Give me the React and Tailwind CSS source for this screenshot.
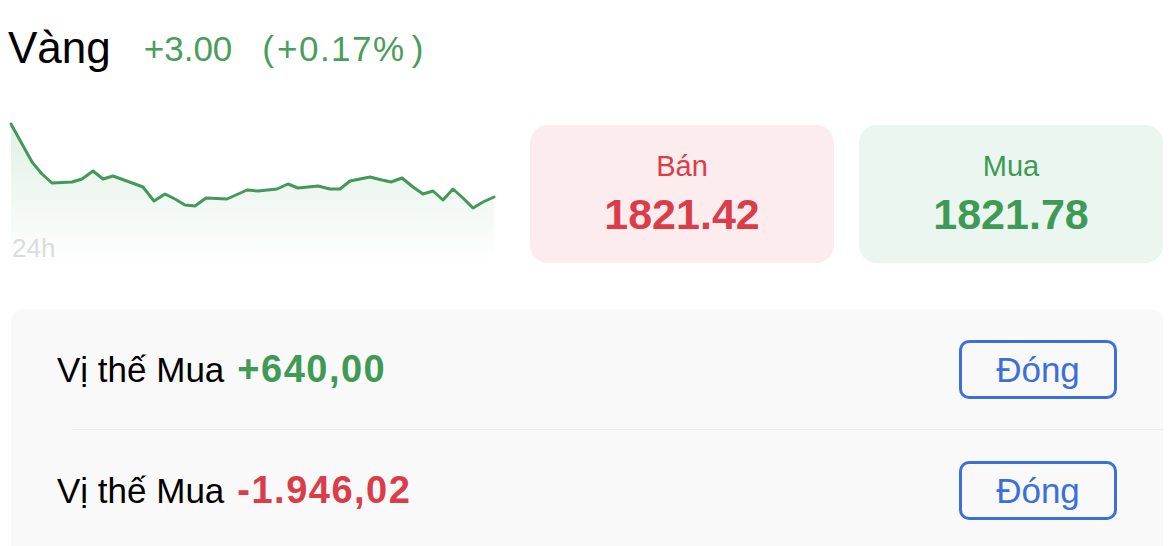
import React from "react";

const pts = [
  [11, 124], [32, 162], [42, 174], [52, 183], [72, 182], [82, 179], [93, 171], [103, 179],
  [113, 176], [135, 184], [143, 187], [154, 201], [165, 194], [175, 199], [185, 205], [195, 206],
  [206, 198], [227, 199], [247, 190], [258, 191], [277, 189], [288, 184], [298, 188], [308, 187],
  [318, 186], [330, 189], [340, 189], [350, 181], [370, 177], [382, 180], [391, 182], [402, 178],
  [413, 187], [423, 194], [433, 191], [443, 200], [453, 189], [463, 198], [473, 208], [483, 202],
  [494, 197],
];

function Chart() {
  const line = pts.map(([x, y], i) => `${i ? "L" : "M"}${x} ${y - 110}`).join(" ");
  const area = `${line} L494 155 L11 155 Z`;
  return (
    <div className="relative w-[520px] h-[160px] shrink-0">
      <svg width="520" height="160" viewBox="0 0 520 160" className="block">
        <defs>
          <linearGradient id="g" x1="0" y1="0" x2="0" y2="1">
            <stop offset="0" stopColor="#43a05a" stopOpacity="0.16" />
            <stop offset="1" stopColor="#43a05a" stopOpacity="0" />
          </linearGradient>
        </defs>
        <path d={area} fill="url(#g)" />
        <path d={line} fill="none" stroke="#43985a" strokeWidth="3" strokeLinejoin="round" strokeLinecap="round" />
      </svg>
      <div className="absolute left-[12px] top-[125px] text-[26px] leading-none text-[#dcdcdc]">24h</div>
    </div>
  );
}

function PriceCard({ label, value, bg, color }) {
  return (
    <div className={`w-[304px] h-[138px] rounded-[18px] flex flex-col items-center pt-[27px] ${bg}`}>
      <div className={`text-[29px] leading-none ${color}`}>{label}</div>
      <div className={`mt-[12px] text-[43px] leading-none font-bold ${color}`}>{value}</div>
    </div>
  );
}

function Row({ value, valueColor }) {
  return (
    <div className="h-[120px] flex items-center justify-between pl-[46px] pr-[46px]">
      <div className="flex items-center">
        <span className="text-[35px] leading-none text-black">Vị thế Mua</span>
        <span className={`ml-[13px] text-[38px] leading-none font-bold tracking-[1.5px] ${valueColor}`}>{value}</span>
      </div>
      <button className="w-[158px] h-[59px] border-[3px] border-[#3a70d8] rounded-[10px] text-[35px] leading-none text-[#3a70d8] flex items-center justify-center">
        Đóng
      </button>
    </div>
  );
}

export default function App() {
  return (
    <div className="w-[1176px] h-[546px] overflow-hidden bg-white" style={{ fontFamily: '"Liberation Sans", Arial, sans-serif' }}>
      <div className="flex items-start pl-[8px] pt-[26px] h-[110px]">
        <div className="flex items-center">
          <span className="text-[44px] leading-none text-black">Vàng</span>
          <span className="ml-[33px] text-[35px] leading-none text-[#4a9d5b]">+3.00</span>
          <span className="ml-[30px] text-[35px] leading-none text-[#4a9d5b]">
            <span className="mr-[3px]">(</span>
            <span className="tracking-[1.5px]">+0.17%</span>
            <span className="ml-[6px]">)</span>
          </span>
        </div>
      </div>
      <div className="flex items-start">
        <Chart />
        <div className="flex gap-[25px] ml-[10px] mt-[15px]">
          <PriceCard label="Bán" value="1821.42" bg="bg-[#fdecee]" color="text-[#da3d49]" />
          <PriceCard label="Mua" value="1821.78" bg="bg-[#eaf6ef]" color="text-[#3f9a56]" />
        </div>
      </div>
      <div className="ml-[11px] mr-[13px] mt-[39px] bg-[#f9f9f9] rounded-t-[12px] h-[260px]">
        <Row value="+640,00" valueColor="text-[#3f9a56]" />
        <div className="ml-[61px] border-b border-[#ececec]" />
        <Row value="-1.946,02" valueColor="text-[#da3d49]" />
      </div>
    </div>
  );
}
